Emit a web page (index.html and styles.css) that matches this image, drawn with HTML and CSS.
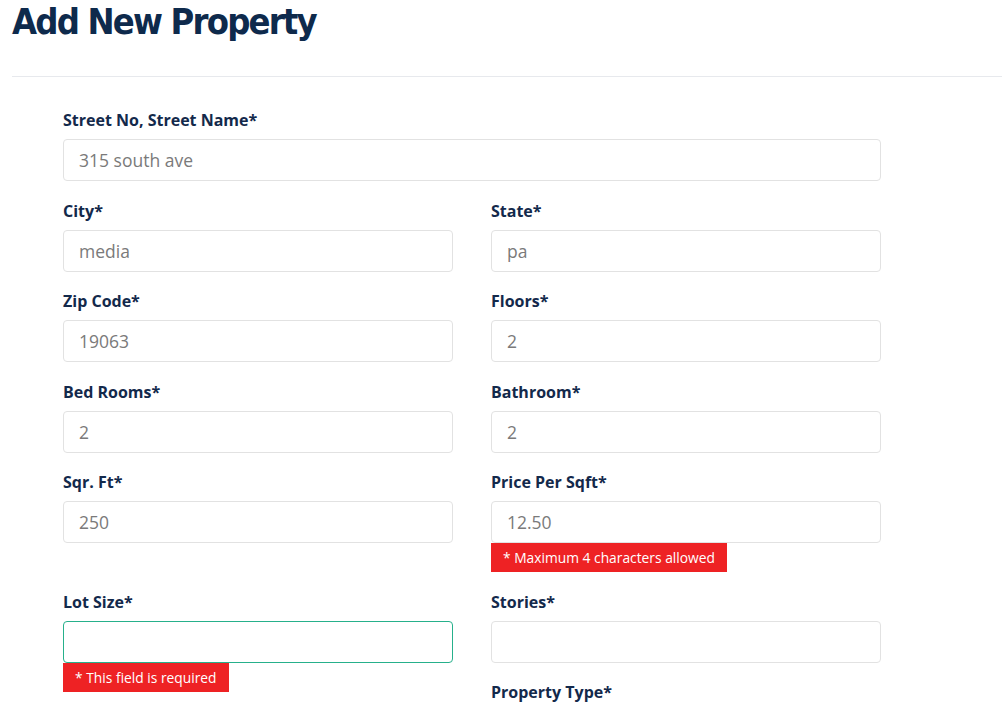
FILE: index.html
```html
<!DOCTYPE html>
<html>
<head>
<meta charset="utf-8">
<link rel="stylesheet" href="styles.css">
</head>
<body>
<div class="page">
  <h1 class="title">Add New Property</h1>
  <hr class="divider">
  <form class="form">
    <div class="field full">
      <label class="label">Street No, Street Name*</label>
      <input class="input" type="text" value="315 south ave">
    </div>
    <div class="grid">
      <div class="field">
        <label class="label">City*</label>
        <input class="input" type="text" value="media">
      </div>
      <div class="field">
        <label class="label">State*</label>
        <input class="input" type="text" value="pa">
      </div>
      <div class="field">
        <label class="label">Zip Code*</label>
        <input class="input" type="text" value="19063">
      </div>
      <div class="field">
        <label class="label">Floors*</label>
        <input class="input" type="text" value="2">
      </div>
      <div class="field">
        <label class="label">Bed Rooms*</label>
        <input class="input" type="text" value="2">
      </div>
      <div class="field">
        <label class="label">Bathroom*</label>
        <input class="input" type="text" value="2">
      </div>
      <div class="field">
        <label class="label">Sqr. Ft*</label>
        <input class="input" type="text" value="250">
      </div>
      <div class="field">
        <label class="label">Price Per Sqft*</label>
        <input class="input" type="text" value="12.50">
        <div class="error">* Maximum 4 characters allowed</div>
      </div>
      <div class="field">
        <label class="label">Lot Size*</label>
        <input class="input focused" type="text" value="">
        <div class="error">* This field is required</div>
      </div>
      <div class="stack">
        <div class="field">
          <label class="label">Stories*</label>
          <input class="input" type="text" value="">
        </div>
        <div class="field">
          <label class="label">Property Type*</label>
        </div>
      </div>
    </div>
  </form>
</div>
</body>
</html>
```
FILE: styles.css
```css
html, body {
  margin: 0;
  padding: 0;
  background: #ffffff;
}
.page {
  padding-left: 12px;
  overflow: hidden;
}
.title {
  margin: 0;
  font-family: "DejaVu Sans", sans-serif;
  font-stretch: condensed;
  font-weight: bold;
  font-size: 36px;
  line-height: 44px;
  color: #0e2a4c;
  letter-spacing: -1.8px;
  height: 44px;
}
.divider {
  margin: 32px 0 0 0;
  border: 0;
  border-top: 1px solid #e7e9ed;
  height: 0;
}
.form {
  width: 818px;
  padding: 33px 0 0 51px;
  font-family: "Open Sans", sans-serif;
}
.grid {
  display: grid;
  grid-template-columns: 390px 390px;
  column-gap: 38px;
  align-items: start;
}
.field {
  display: flex;
  flex-direction: column;
  margin-bottom: 19.5px;
}
.stack {
  display: flex;
  flex-direction: column;
}
.label {
  font-size: 16px;
  font-weight: bold;
  line-height: 21px;
  color: #13294b;
  margin-bottom: 8px;
}
.input {
  box-sizing: border-box;
  height: 42px;
  width: 100%;
  border: 1px solid #e2e2e2;
  border-radius: 4px;
  padding: 0 15px;
  font-family: "Open Sans", sans-serif;
  font-size: 17.5px;
  color: #7a7a7a;
  background: #fff;
  outline: none;
}
.input.focused {
  border-color: #26b08b;
}
.error {
  align-self: flex-start;
  background: #ee2224;
  color: #ffffff;
  font-size: 13.8px;
  line-height: 29px;
  height: 29px;
  padding: 0 12px;
  margin-top: 0;
}
```
